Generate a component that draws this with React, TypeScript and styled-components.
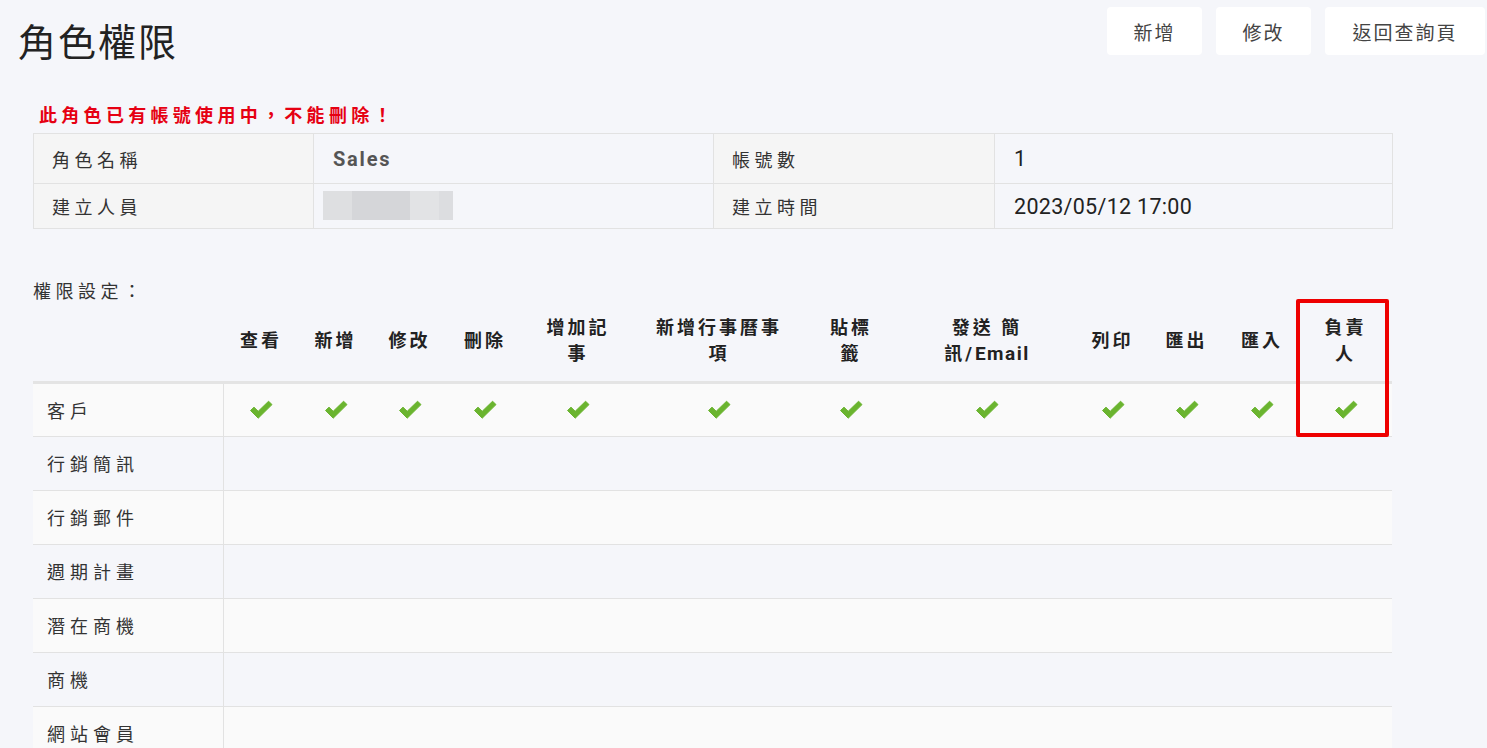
import React from "react";
import styled, { createGlobalStyle } from "styled-components";

const Global = createGlobalStyle`
  html, body { margin: 0; padding: 0; background: #f5f6fa; }
  body { font-family: Roboto, "Noto Sans CJK TC", sans-serif; color: #333; }
  * { box-sizing: border-box; }
`;

const Page = styled.div`
  padding: 7px 2px 0 18px;
  height: 748px;
  overflow: hidden;
`;

const Header = styled.div`
  display: flex;
  justify-content: space-between;
  align-items: flex-start;
`;

const Title = styled.h1`
  margin: 13px 0 0 0;
  font-size: 38px;
  line-height: 46px;
  font-weight: 400;
  letter-spacing: 2px;
  color: #222;
`;

const Buttons = styled.div`
  display: flex;
  gap: 14px;
`;

const Button = styled.button<{ $w: number }>`
  width: ${(p) => p.$w}px;
  height: 48px;
  border: none;
  border-radius: 4px;
  background: #fff;
  color: #444;
  font-family: Roboto, "Noto Sans CJK TC", sans-serif;
  font-size: 19px;
  letter-spacing: 2px;
  cursor: pointer;
`;

const Content = styled.div`
  margin-left: 15px;
  width: 1359px;
`;

const Warning = styled.div`
  margin: 39px 0 0 6px;
  height: 21px;
  line-height: 21px;
  font-size: 18px;
  font-weight: 700;
  letter-spacing: 4.3px;
  color: #e60012;
`;

const InfoTable = styled.table`
  margin-top: 7px;
  width: 1359px;
  border-collapse: collapse;
  table-layout: fixed;
  font-size: 18px;
`;

const InfoRow = styled.tr<{ $h: number }>`
  height: ${(p) => p.$h}px;
`;

const InfoLabel = styled.td`
  border: 1px solid #e2e2e2;
  background: #f5f5f5;
  padding: 0 0 0 18px;
  letter-spacing: 4.5px;
  color: #333;
`;

const InfoValue = styled.td<{ $bold?: boolean }>`
  border: 1px solid #e2e2e2;
  background: #f5f6fa;
  padding: 0 0 0 19px;
  font-size: ${(p) => (p.$bold ? "20px" : "21.5px")};
  font-weight: ${(p) => (p.$bold ? 700 : 400)};
  letter-spacing: ${(p) => (p.$bold ? "1.8px" : "0.3px")};
  color: ${(p) => (p.$bold ? "#555" : "#222")};
`;

const Blur = styled.div`
  display: flex;
  height: 29px;
  margin: -2px 0 0 -10px;
`;

const BlurBit = styled.span<{ $c: string; $w: number }>`
  width: ${(p) => p.$w}px;
  background: ${(p) => p.$c};
`;

const SectionLabel = styled.div`
  margin-top: 56px;
  height: 16px;
  line-height: 14px;
  font-size: 18px;
  letter-spacing: 4.5px;
  color: #333;
`;

const PermWrap = styled.div`
  position: relative;
`;

const PermTable = styled.table`
  width: 1359px;
  border-collapse: collapse;
  table-layout: fixed;
  font-size: 18px;
`;

const HeadRow = styled.tr`
  height: 81px;
`;

const HeadCell = styled.th`
  border-bottom: 3px solid #e4e4e4;
  padding: 0;
  font-weight: 700;
  font-size: 18px;
  line-height: 26px;
  letter-spacing: 3px;
  text-align: center;
  color: #222;
  vertical-align: middle;
`;

const Latin = styled.span`
  font-size: 19px;
  letter-spacing: 1.5px;
`;

const BodyRow = styled.tr<{ $odd: boolean }>`
  height: 54px;
  background: ${(p) => (p.$odd ? "#fafafa" : "#f5f6fa")};
`;

const RowLabel = styled.td`
  border-bottom: 1px solid #e2e2e2;
  border-right: 1px solid #e2e2e2;
  padding: 0 0 0 14px;
  letter-spacing: 5px;
  color: #333;
`;

const CheckCell = styled.td`
  border-bottom: 1px solid #e2e2e2;
  text-align: center;
  vertical-align: middle;
  padding: 0;
`;

const Highlight = styled.div`
  position: absolute;
  top: -2px;
  right: 3px;
  width: 93px;
  height: 138px;
  border: 4px solid #ee0000;
  border-radius: 2px;
  pointer-events: none;
`;

const Check = () => (
  <svg width="24" height="20" viewBox="0 0 24 20" style={{ display: "block", margin: "1px auto 0" }}>
    <path d="M1.5 10.5 L5 7.2 L9.2 11.3 L19.6 1.2 L23 4.6 L9.2 18.2 Z" fill="#6ab42f" strokeLinejoin="round" stroke="#6ab42f" strokeWidth="1" />
  </svg>
);

const cols = [190, 76, 73, 75, 76, 110, 172, 92, 180, 71, 77, 74, 93];

const headers: React.ReactNode[] = [
  "",
  "查看",
  "新增",
  "修改",
  "刪除",
  <>增加記<br />事</>,
  <>新增行事曆事<br />項</>,
  <>貼標<br />籤</>,
  <>發送 簡<br />訊/<Latin>Email</Latin></>,
  "列印",
  "匯出",
  "匯入",
  <>負責<br />人</>,
];

const modules = ["客戶", "行銷簡訊", "行銷郵件", "週期計畫", "潛在商機", "商機", "網站會員"];

export default function App() {
  return (
    <>
      <Global />
      <Page>
        <Header>
          <Title>角色權限</Title>
          <Buttons>
            <Button $w={95}>新增</Button>
            <Button $w={95}>修改</Button>
            <Button $w={160}>返回查詢頁</Button>
          </Buttons>
        </Header>
        <Content>
          <Warning>此角色已有帳號使用中，不能刪除！</Warning>
          <InfoTable>
            <colgroup>
              <col style={{ width: 280 }} />
              <col style={{ width: 400 }} />
              <col style={{ width: 281 }} />
              <col style={{ width: 398 }} />
            </colgroup>
            <tbody>
              <InfoRow $h={50}>
                <InfoLabel>角色名稱</InfoLabel>
                <InfoValue $bold>Sales</InfoValue>
                <InfoLabel>帳號數</InfoLabel>
                <InfoValue>1</InfoValue>
              </InfoRow>
              <InfoRow $h={45}>
                <InfoLabel>建立人員</InfoLabel>
                <InfoValue>
                  <Blur>
                    <BlurBit $c="#dedfe1" $w={29} />
                    <BlurBit $c="#d5d6d9" $w={58} />
                    <BlurBit $c="#e2e3e5" $w={29} />
                    <BlurBit $c="#dcdde0" $w={14} />
                  </Blur>
                </InfoValue>
                <InfoLabel>建立時間</InfoLabel>
                <InfoValue>2023/05/12 17:00</InfoValue>
              </InfoRow>
            </tbody>
          </InfoTable>
          <SectionLabel>權限設定：</SectionLabel>
          <PermWrap>
            <PermTable>
              <colgroup>
                {cols.map((w, i) => (
                  <col key={i} style={{ width: w }} />
                ))}
              </colgroup>
              <thead>
                <HeadRow>
                  {headers.map((h, i) => (
                    <HeadCell key={i}>{h}</HeadCell>
                  ))}
                </HeadRow>
              </thead>
              <tbody>
                {modules.map((m, r) => (
                  <BodyRow key={m} $odd={r % 2 === 0}>
                    <RowLabel>{m}</RowLabel>
                    {cols.slice(1).map((_, c) => (
                      <CheckCell key={c}>{r === 0 ? <Check /> : null}</CheckCell>
                    ))}
                  </BodyRow>
                ))}
              </tbody>
            </PermTable>
            <Highlight />
          </PermWrap>
        </Content>
      </Page>
    </>
  );
}
